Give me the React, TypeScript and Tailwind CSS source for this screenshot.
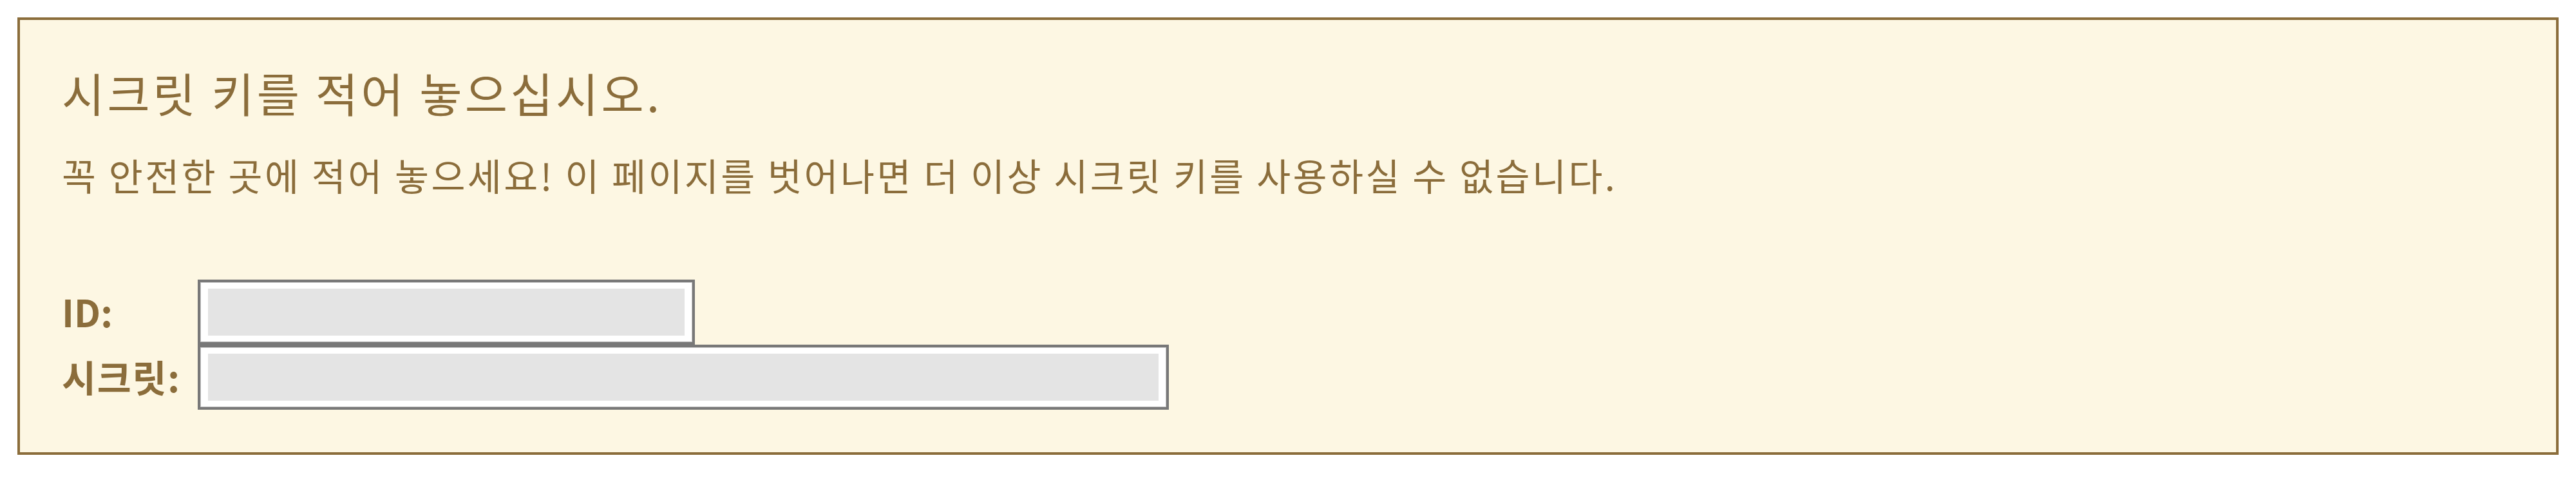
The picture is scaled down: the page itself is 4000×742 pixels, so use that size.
const cjk = { fontFamily: '"Noto Sans CJK KR", "Noto Sans", sans-serif' };

function MaskedField({ width }: { width: string }) {
    return (
        <div className={`border-4 border-[#787878] ${width}`}>
            <div className="border border-[#c4c4c4] bg-white px-[11px] py-[9px]">
                <div className="h-[73px] bg-[#e4e4e4]" />
            </div>
        </div>
    );
}

export default function App() {
    return (
        <div className="w-[4000px] h-[742px] bg-white p-[27px]" style={cjk}>
            <div className="border-4 border-[#8b6d3b] bg-[#fdf7e3] pl-[65px] pt-[76px] pb-[66px] text-[#8b6d3b]">
                {/* Heading */}
                <h2 className="text-[72px] leading-[72px] font-normal tracking-[0.06em]">
                    시크릿 키를 적어 놓으십시오.
                </h2>
                <p className="mt-[64px] text-[57.6px] leading-[57.6px] tracking-[0.06em]">
                    꼭 안전한 곳에 적어 놓으세요! 이 페이지를 벗어나면 더 이상 시크릿 키를 사용하실 수 없습니다.
                </p>

                {/* Credentials */}
                <div className="mt-[133px] grid grid-cols-[211px_auto] items-center justify-start">
                    <span className="text-[57.6px] leading-none font-bold">ID:</span>
                    <MaskedField width="w-[772px]" />
                    <span className="text-[57.6px] leading-none font-bold tracking-[0.03em]">시크릿:</span>
                    <MaskedField width="w-[1508px]" />
                </div>
            </div>
        </div>
    );
}
